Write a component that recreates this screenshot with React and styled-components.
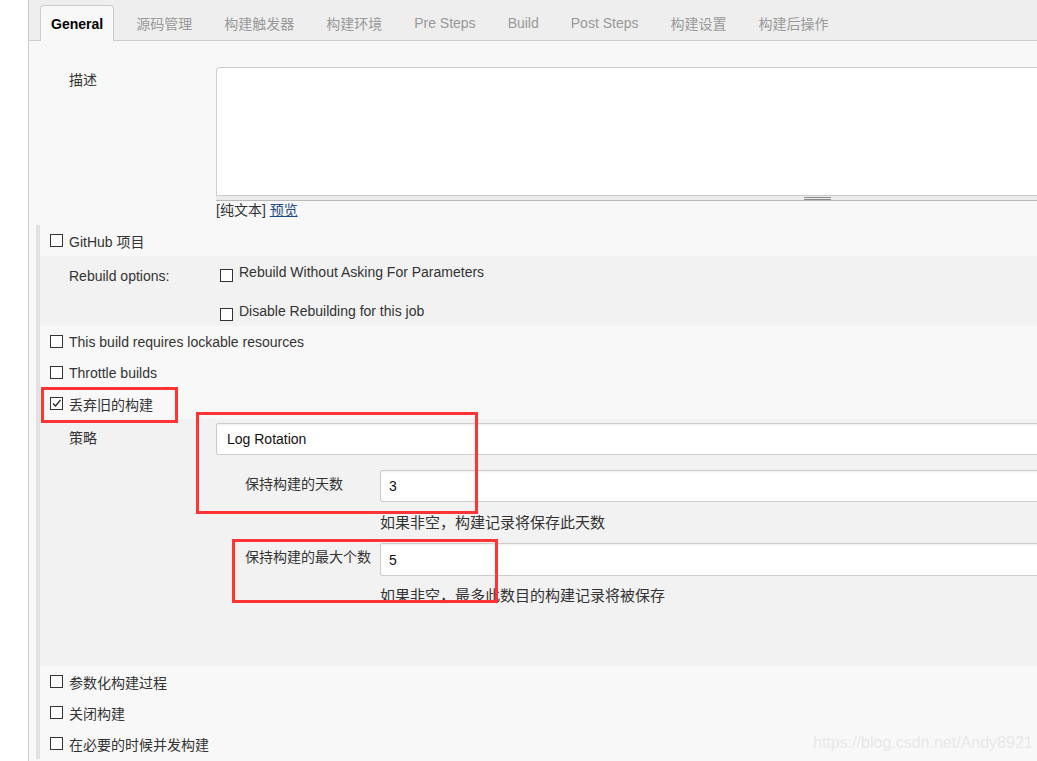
import React from 'react';
import styled, { createGlobalStyle } from 'styled-components';

const GlobalStyle = createGlobalStyle`
  html, body {
    margin: 0;
    padding: 0;
    background: #fff;
    overflow: hidden;
  }
  body {
    font-family: "Liberation Sans", Arial, "Noto Sans CJK SC", sans-serif;
    font-size: 14px;
    color: #333;
  }
`;

const Root = styled.div`
  position: relative;
  width: 1037px;
  height: 761px;
  overflow: hidden;
`;

const Page = styled.div`
  margin-left: 28px;
  border-left: 1px solid #ccc;
  background: #f8f8f8;
  height: 761px;
  overflow: hidden;
`;

const TabBar = styled.div`
  display: flex;
  align-items: flex-end;
  height: 40px;
  padding-left: 11px;
  background: #eee;
  border-bottom: 1px solid #ccc;
`;

const Tab = styled.div`
  display: flex;
  align-items: center;
  height: ${(p) => (p.$active ? '36px' : '35px')};
  padding: 0 ${(p) => (p.$active ? '10px' : '16px')};
  margin-right: ${(p) => (p.$active ? '6px' : '0')};
  margin-bottom: ${(p) => (p.$active ? '-1px' : '0')};
  box-sizing: border-box;
  font-size: 14px;
  white-space: nowrap;
  color: ${(p) => (p.$active ? '#000' : '#999')};
  font-weight: ${(p) => (p.$active ? 'bold' : 'normal')};
  background: ${(p) => (p.$active ? '#f8f8f8' : 'transparent')};
  border: ${(p) => (p.$active ? '1px solid #ccc' : 'none')};
  border-bottom: none;
  border-radius: 4px 4px 0 0;
`;

const DescRow = styled.div`
  display: grid;
  grid-template-columns: 147px 1fr;
  padding-left: 40px;
  margin-top: 26px;
`;

const Label = styled.div`
  line-height: 20px;
  padding-top: ${(p) => p.$top || 0}px;
  white-space: nowrap;
`;

const Field = styled.div`
  margin-right: -420px;
`;

const TextArea = styled.div`
  height: 128px;
  box-sizing: border-box;
  background: #fff;
  border: 1px solid #ccc;
  border-bottom: none;
  border-radius: 4px 4px 0 0;
`;

const Grip = styled.div`
  display: flex;
  align-items: center;
  height: 6px;
  box-sizing: border-box;
  padding-left: 588px;
  background: #ebebeb;
  border-top: 1px solid #ccc;
  border-bottom: 1px solid #b8b8b8;
`;

const GripLines = styled.span`
  width: 27px;
  height: 3px;
  box-sizing: border-box;
  border-top: 1px solid #8a8a8a;
  border-bottom: 1px solid #8a8a8a;
`;

const Hint = styled.div`
  line-height: 18px;
  font-size: 14px;
  margin-bottom: 6px;
`;

const Link = styled.a`
  color: #204a87;
  text-decoration: underline;
  cursor: pointer;
`;

const Section = styled.div`
  margin-left: 7px;
  border-left: 4px solid #e2e2e2;
`;

const CheckRow = styled.div`
  display: flex;
  align-items: center;
  gap: 6px;
  height: 31px;
  padding-left: 10px;
  white-space: nowrap;
`;

const Box = styled.span`
  display: inline-flex;
  align-items: center;
  justify-content: center;
  flex: none;
  width: 13px;
  height: 13px;
  box-sizing: border-box;
  border: 1px solid #333;
  background: #fff;
  margin-top: ${(p) => p.$offset || 0}px;
`;

const SubBlock = styled.div`
  display: grid;
  grid-template-columns: 151px 1fr;
  background: #f2f2f2;
  padding: ${(p) => p.$pad};
`;

const Options = styled.div`
  display: flex;
  flex-direction: column;
  gap: 19px;
`;

const OptionRow = styled.label`
  display: flex;
  align-items: flex-start;
  gap: 6px;
  line-height: 20px;
  white-space: nowrap;
`;

const Nested = styled.div`
  background: #f2f2f2;
  padding: 4px 0 60px 29px;
`;

const NestRow = styled.div`
  display: grid;
  grid-template-columns: ${(p) => p.$cols};
`;

const InputBox = styled.div`
  display: flex;
  align-items: center;
  height: ${(p) => p.$h || 33}px;
  box-sizing: border-box;
  padding-left: ${(p) => p.$pl || 8}px;
  margin-right: -400px;
  background: #fff;
  border: 1px solid #ccc;
  border-radius: 2px;
  box-shadow: inset 0 1px 2px rgba(0, 0, 0, 0.07);
  font-size: 14px;
  color: #111;
`;

const Strategy = styled.div`
  display: flex;
  flex-direction: column;
`;

const Inner = styled.div`
  padding-left: 29px;
  margin-top: ${(p) => p.$mt}px;
`;

const Help = styled.div`
  font-size: 15px;
  line-height: 20px;
  margin-top: ${(p) => p.$mt}px;
  white-space: nowrap;
`;

const Mark = styled.div`
  position: absolute;
  box-sizing: border-box;
  border: 3px solid #ff3535;
  pointer-events: none;
`;

const Watermark = styled.div`
  position: absolute;
  left: 813px;
  top: 733px;
  font-size: 16px;
  line-height: 20px;
  color: #e8e8e8;
  white-space: nowrap;
`;

const tabs = ['General', '源码管理', '构建触发器', '构建环境', 'Pre Steps', 'Build', 'Post Steps', '构建设置', '构建后操作'];

function Checkbox({ checked, offset }) {
  return (
    <Box $offset={offset}>
      {checked && (
        <svg width="11" height="11" viewBox="0 0 11 11">
          <path d="M2 5.5 L4.5 8 L9.5 2" fill="none" stroke="#222" strokeWidth="1.2" />
        </svg>
      )}
    </Box>
  );
}

export default function App() {
  return (
    <Root>
      <GlobalStyle />
      <Page>
        <TabBar>
          {tabs.map((t, i) => (
            <Tab key={t} $active={i === 0}>{t}</Tab>
          ))}
        </TabBar>

        <DescRow>
          <Label $top={3}>描述</Label>
          <Field>
            <TextArea />
            <Grip><GripLines /></Grip>
            <Hint>[纯文本] <Link>预览</Link></Hint>
          </Field>
        </DescRow>

        <Section>
          <CheckRow><Checkbox />GitHub 项目</CheckRow>
          <SubBlock $pad="6px 0 5px 29px">
            <Label $top={4}>Rebuild options:</Label>
            <Options>
              <OptionRow><Checkbox offset={7} />Rebuild Without Asking For Parameters</OptionRow>
              <OptionRow><Checkbox offset={7} />Disable Rebuilding for this job</OptionRow>
            </Options>
          </SubBlock>
          <CheckRow>
            <Checkbox />This build requires lockable resources
          </CheckRow>
          <CheckRow><Checkbox />Throttle builds</CheckRow>
          <CheckRow><Checkbox checked />丢弃旧的构建</CheckRow>

          <Nested>
            <NestRow $cols="147px 1fr">
              <Label $top={5}>策略</Label>
              <Strategy>
                <InputBox $h={32} $pl={10}>Log Rotation</InputBox>
                <Inner $mt={15}>
                  <NestRow $cols="135px 1fr">
                    <Label $top={4}>保持构建的天数</Label>
                    <div>
                      <InputBox $h={32}>3</InputBox>
                      <Help $mt={11}>如果非空，构建记录将保存此天数</Help>
                    </div>
                  </NestRow>
                </Inner>
                <Inner $mt={10}>
                  <NestRow $cols="135px 1fr">
                    <Label $top={4}>保持构建的最大个数</Label>
                    <div>
                      <InputBox $h={33}>5</InputBox>
                      <Help $mt={10}>如果非空，最多此数目的构建记录将被保存</Help>
                    </div>
                  </NestRow>
                </Inner>
              </Strategy>
            </NestRow>
          </Nested>

          <CheckRow><Checkbox />参数化构建过程</CheckRow>
          <CheckRow><Checkbox />关闭构建</CheckRow>
          <CheckRow><Checkbox />在必要的时候并发构建</CheckRow>
        </Section>
      </Page>

      <Mark style={{ left: 41, top: 387, width: 137, height: 36 }} />
      <Mark style={{ left: 196, top: 412, width: 282, height: 102 }} />
      <Mark style={{ left: 232, top: 539, width: 266, height: 64 }} />
      <Watermark>https://blog.csdn.net/Andy8921</Watermark>
    </Root>
  );
}
